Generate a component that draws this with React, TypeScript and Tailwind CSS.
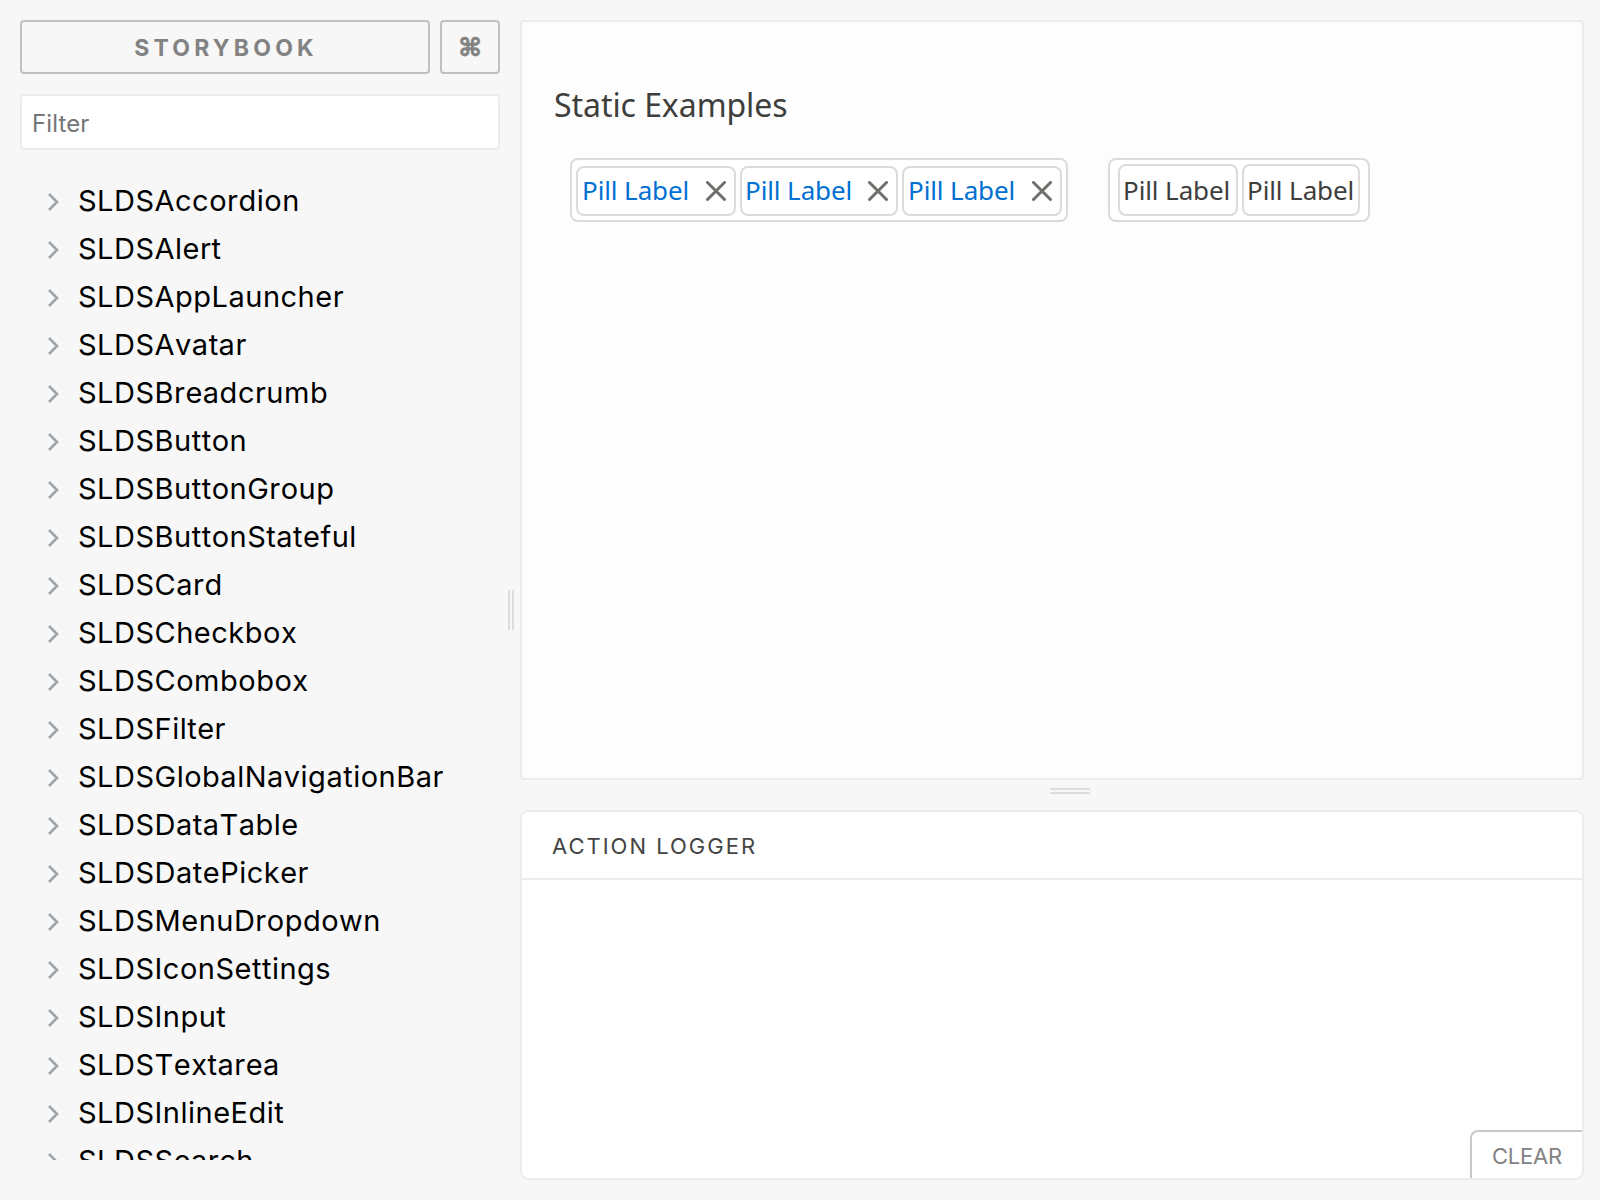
import React from 'react';

const components = [
  'SLDSAccordion',
  'SLDSAlert',
  'SLDSAppLauncher',
  'SLDSAvatar',
  'SLDSBreadcrumb',
  'SLDSButton',
  'SLDSButtonGroup',
  'SLDSButtonStateful',
  'SLDSCard',
  'SLDSCheckbox',
  'SLDSCombobox',
  'SLDSFilter',
  'SLDSGlobalNavigationBar',
  'SLDSDataTable',
  'SLDSDatePicker',
  'SLDSMenuDropdown',
  'SLDSIconSettings',
  'SLDSInput',
  'SLDSTextarea',
  'SLDSInlineEdit',
  'SLDSSearch',
];

function Chevron() {
  return (
    <svg className="mt-px h-[18px] w-[11px] shrink-0" viewBox="0 0 11 18" fill="none" stroke="#9da5ab" strokeWidth="2.6">
      <path d="M1 1 L9 9 L1 17" />
    </svg>
  );
}

function CloseIcon() {
  return (
    <svg className="h-5 w-5 shrink-0" viewBox="0 0 20 20" fill="none" stroke="#706e6b" strokeWidth="3" strokeLinecap="round">
      <path d="M1.5 1.5 L18.5 18.5 M18.5 1.5 L1.5 18.5" />
    </svg>
  );
}

function LinkPill({ className }: { className: string }) {
  return (
    <li className={`flex h-[50px] items-center justify-between rounded-lg border-2 border-[#dddbda] bg-white ${className}`}>
      <a className="text-[#0070d2]">Pill Label</a>
      <CloseIcon />
    </li>
  );
}

function PlainPill({ className }: { className: string }) {
  return (
    <li className={`flex h-[52px] items-center rounded-lg border-2 border-[#dddbda] bg-white ${className}`}>
      <span>Pill Label</span>
    </li>
  );
}

function Sidebar() {
  return (
    <aside className="flex w-[480px] shrink-0 flex-col">
      <div className="flex h-[54px] gap-[10px]">
        <button className="w-[410px] rounded border-2 border-[#c1c1c1] pt-[2px] pl-[2px] text-center text-[23px] font-bold tracking-[4.2px] text-[#828282]">
          STORYBOOK
        </button>
        <button className="w-[60px] rounded border-2 border-[#c1c1c1] pt-px text-center font-['DejaVu_Sans',sans-serif] text-[25px] leading-none font-bold text-[#828282] [-webkit-text-stroke:0.8px_#828282]">
          ⌘
        </button>
      </div>
      <input
        placeholder="Filter"
        className="mt-5 h-14 w-full rounded border-2 border-[#ececec] bg-white px-[10px] pt-[3px] text-[24px] tracking-[0.1px] outline-none placeholder:text-[#757575]"
      />
      <ul className="mt-[27px] h-[983px] overflow-hidden pl-7">
        {components.map((name) => (
          <li
            key={name}
            className="flex h-12 items-center gap-[19px] text-[29px] tracking-[0.5px] whitespace-nowrap text-black [font-kerning:none]"
          >
            <Chevron />
            {name}
          </li>
        ))}
      </ul>
    </aside>
  );
}

function Preview() {
  return (
    <section className="h-[760px] rounded border-2 border-[#ececec] bg-[#fdfdfd] pl-8 font-['Noto_Sans',sans-serif] text-[#3e3e3c]">
      <h2 className="pt-[60px] text-[32px] leading-[46px] tracking-[-0.06px]">Static Examples</h2>
      <div className="mt-[30px] ml-4 flex gap-10 text-[26px] tracking-[-0.1px] whitespace-nowrap">
        <ul className="flex h-16 w-[498px] items-center gap-1 rounded-lg border-2 border-[#dddbda] bg-white pt-px pl-1">
          <LinkPill className="w-[160px] pr-2 pl-1" />
          <LinkPill className="w-[158px] pr-2 pl-[3px]" />
          <LinkPill className="w-[160px] pr-2 pl-1" />
        </ul>
        <ul className="flex h-16 w-[262px] items-center gap-1 rounded-lg border-2 border-[#dddbda] bg-white pl-2">
          <PlainPill className="w-[120px] pl-[3px]" />
          <PlainPill className="w-[118px] pl-[3px]" />
        </ul>
      </div>
    </section>
  );
}

function ActionLogger() {
  return (
    <section className="flex h-[370px] flex-col overflow-hidden rounded-lg border-2 border-[#ececec] bg-white">
      <header className="flex h-[68px] items-center border-b-2 border-[#eaeaea] pt-[2px] pl-[30px] text-[22px] tracking-[2px] text-[#444444]">
        ACTION LOGGER
      </header>
      <div className="flex flex-1 items-end justify-end">
        <button className="h-12 w-[112px] rounded-tl-lg border-t-2 border-l-2 border-[#c8c8c8] pt-[2px] text-center text-[22px] tracking-[-0.2px] text-[#828282]">
          CLEAR
        </button>
      </div>
    </section>
  );
}

export default function App() {
  return (
    <div className="flex h-[1200px] w-[1600px] overflow-hidden bg-[#f7f7f7] pt-5 pl-5 font-['Inter',sans-serif]">
      <Sidebar />
      <div className="flex h-[1180px] w-5 items-center justify-center pl-2">
        <div className="mr-[6px] h-10 w-[6px] shrink-0 border-x-2 border-[#dddddd]" />
      </div>
      <main className="w-[1064px]">
        <Preview />
        <div className="flex h-[30px] justify-center pt-2 pl-9">
          <div className="h-[6px] w-10 border-y-2 border-[#dddddd]" />
        </div>
        <ActionLogger />
      </main>
    </div>
  );
}
